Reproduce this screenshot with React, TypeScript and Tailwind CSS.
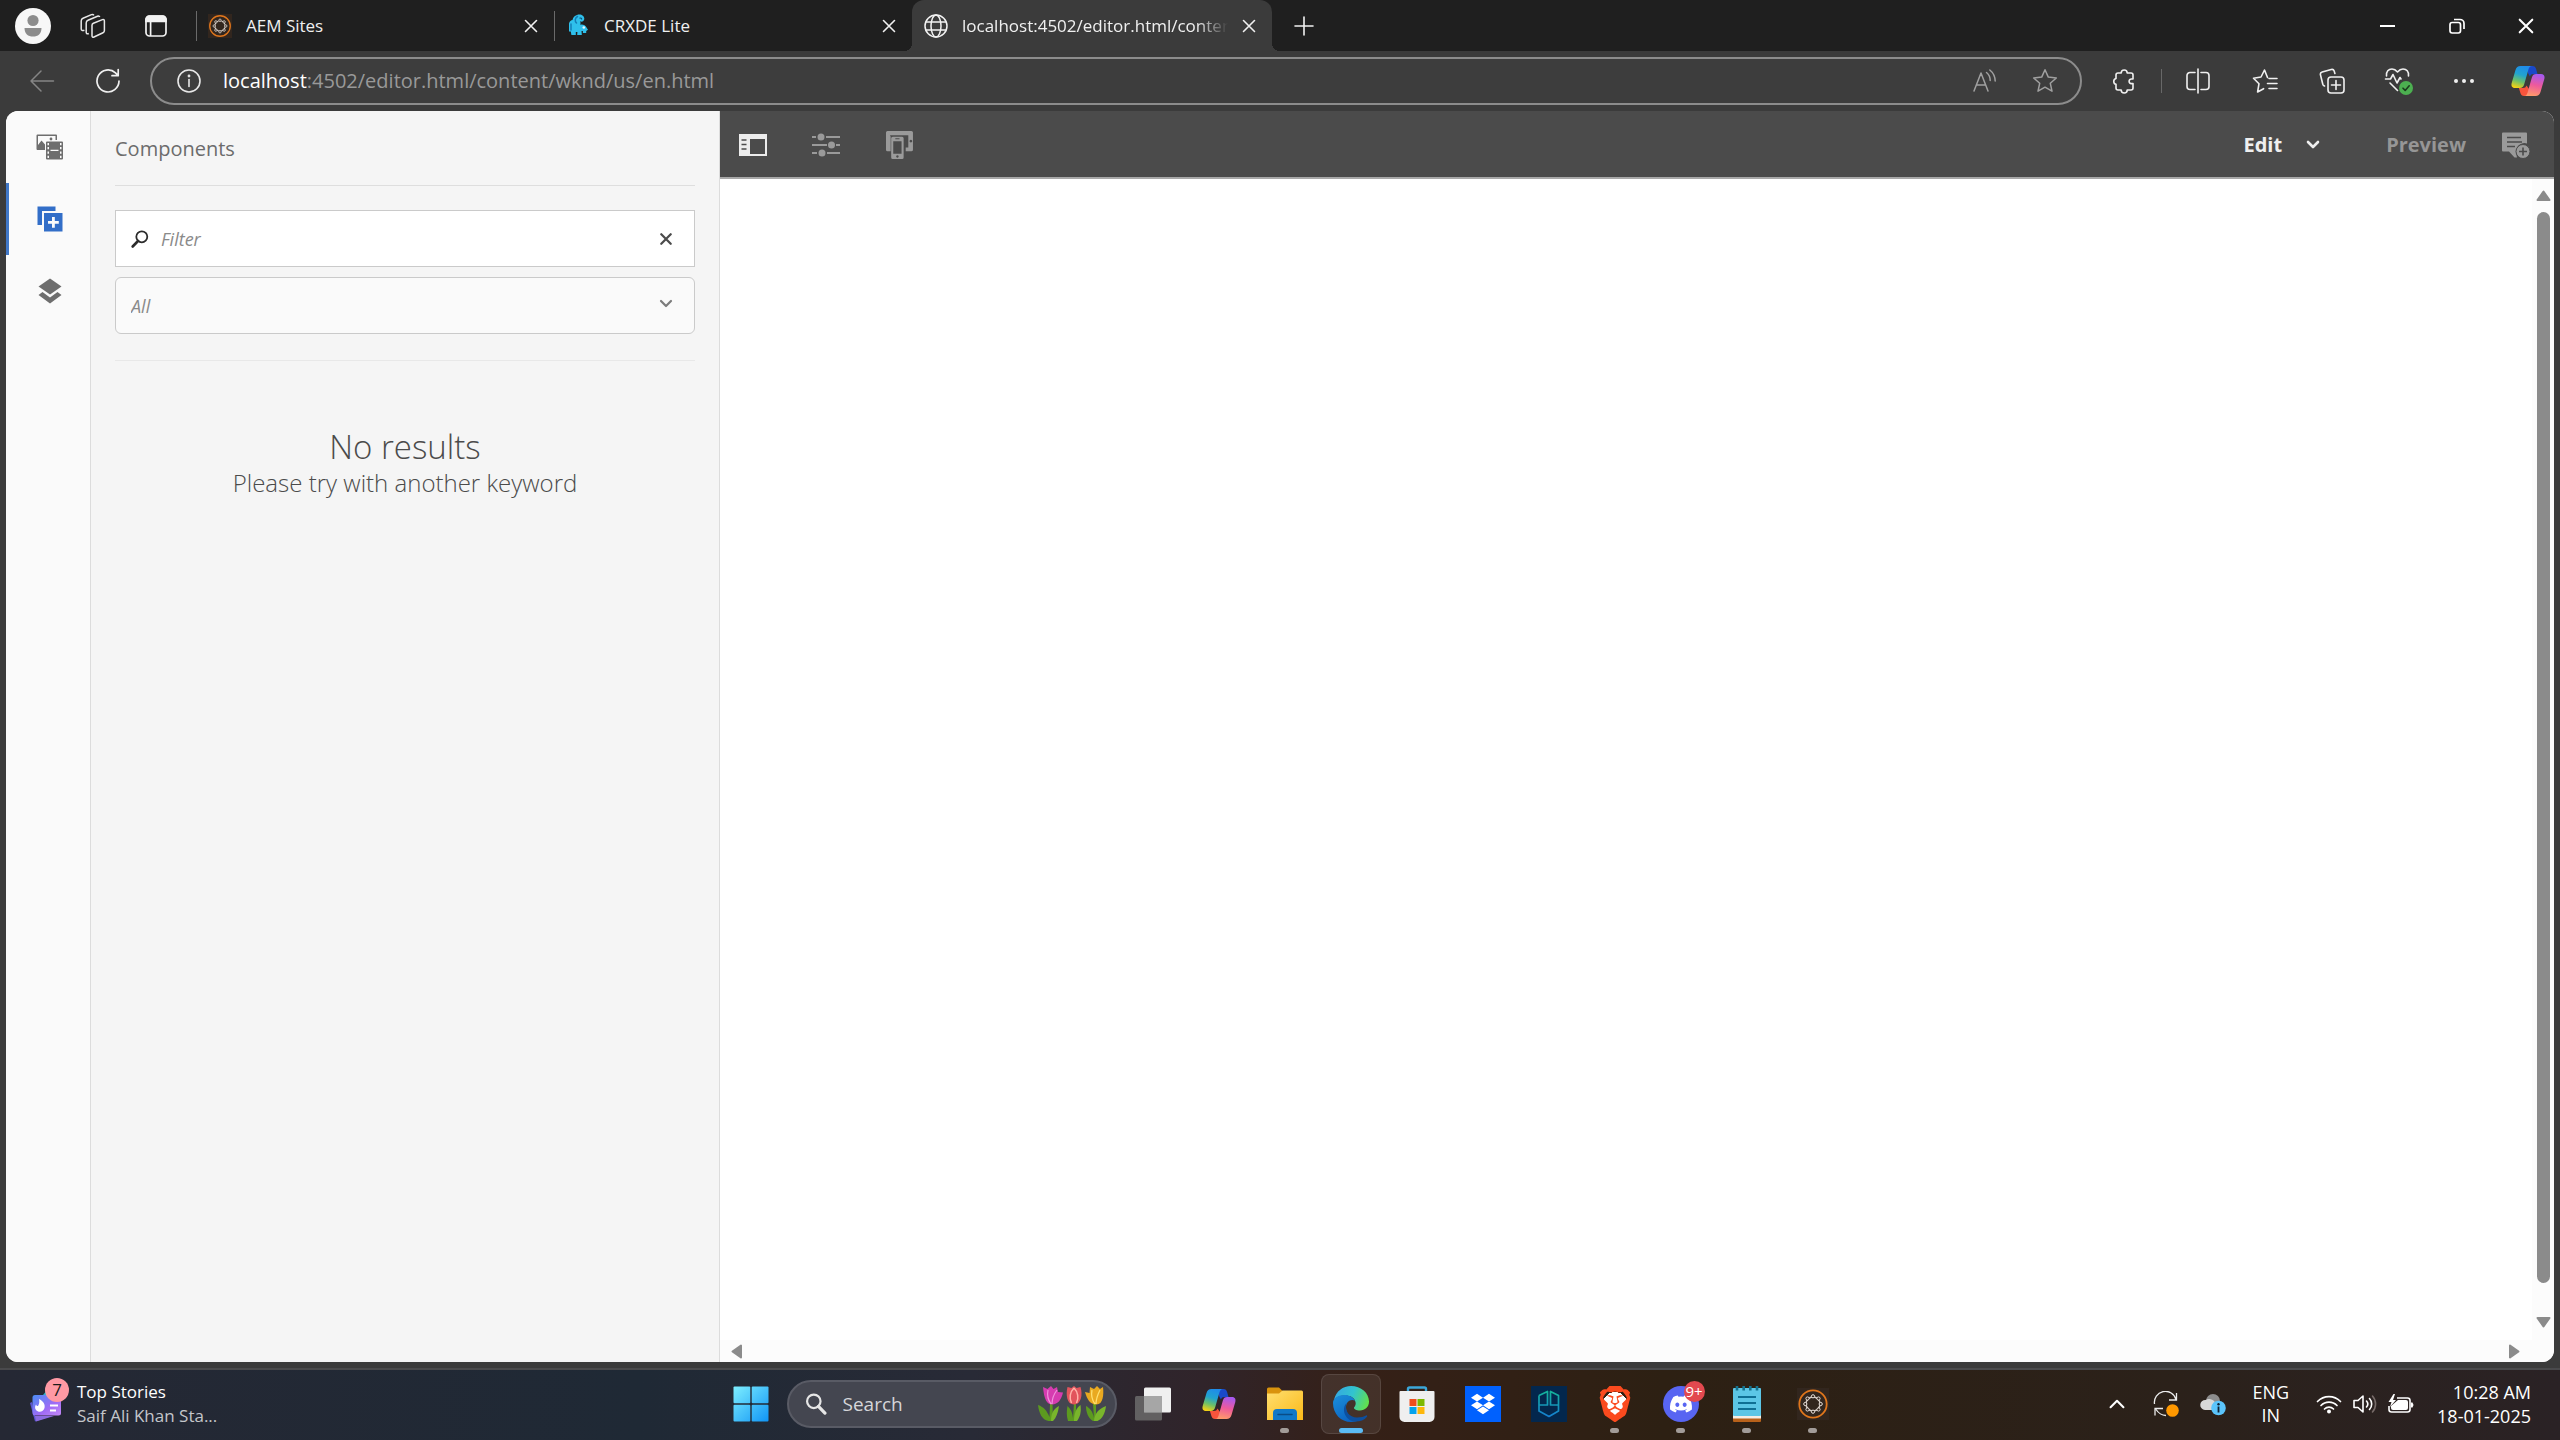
import React from "react";
import { FaDiscord, FaDropbox } from "react-icons/fa";
import { SiBrave } from "react-icons/si";

type P = { className?: string };

/* ---------- browser chrome icons ---------- */

const Cross = ({ className = "size-3.5", w = 1.6 }: P & { w?: number }) => (
  <svg viewBox="0 0 14 14" className={className} fill="none" stroke="currentColor" strokeWidth={w} strokeLinecap="round">
    <path d="M1.5 1.5l11 11M12.5 1.5l-11 11" />
  </svg>
);

const Avatar = () => (
  <svg viewBox="0 0 36 36" className="size-9">
    <circle cx="18" cy="18" r="18" fill="#f7f7f7" />
    <circle cx="18" cy="12.5" r="5.6" fill="#8c8c8c" />
    <path d="M9.5 20h17c0 6-3.5 8.500-8.500 8.500S9.500 26 9.500 20z" fill="#8c8c8c" />
  </svg>
);

const Workspaces = () => (
  <svg viewBox="0 0 26 26" className="size-6.5" fill="none" stroke="#e8e8e8" strokeWidth="1.5" strokeLinejoin="round">
    <path d="M12 12.300c0-1 .5-1.700 1.400-2.100l9-3.600c1.100-.4 2 .1 2 1.300v9.600c0 1-.5 1.800-1.400 2.200l-9 4.300c-1.100.5-2 0-2-1.200z" />
    <path d="M8.800 20.500c-1.500.8-2.600.2-2.600-1.200V10c0-1.300.6-2.200 1.800-2.700l9.500-4c1-.4 1.900-.1 2.200.8" />
    <path d="M4.400 17.300C2.300 18 1.200 17.300 1.200 16V8c0-1.300.6-2.200 1.800-2.700L11.500 1.600c1-.4 1.900-.1 2.400.7" />
  </svg>
);

const TabActions = () => (
  <svg viewBox="0 0 24 24" className="size-6" fill="none" stroke="#f2f2f2" strokeWidth="1.700">
    <rect x="2" y="2" width="20" height="20" rx="3.500" />
    <path d="M2 5.500A3.500 3.500 0 0 1 5.500 2h13A3.500 3.500 0 0 1 22 5.500V7.500H2z" fill="#f2f2f2" />
    <path d="M6.600 8v14" />
  </svg>
);

const AemIcon = ({ className }: P) => (
  <svg viewBox="0 0 32 32" className={className}>
    <rect width="32" height="32" fill="#32261e" />
    <circle cx="16" cy="16" r="13.700" fill="none" stroke="#e0761c" strokeWidth="1.800" />
    <circle cx="16" cy="16" r="7" fill="none" stroke="#d9cfc8" strokeWidth="1.500" />
    <g fill="#32261e" stroke="#e8e0da" strokeWidth="1">
      <circle cx="16" cy="8.300" r="1.600" /><circle cx="21.500" cy="10.500" r="1.600" />
      <circle cx="23.700" cy="16" r="1.600" /><circle cx="21.500" cy="21.500" r="1.600" />
      <circle cx="16" cy="23.700" r="1.600" /><circle cx="10.500" cy="21.500" r="1.600" />
      <circle cx="8.300" cy="16" r="1.600" /><circle cx="10.500" cy="10.500" r="1.600" />
    </g>
  </svg>
);

const CrxIcon = () => (
  <svg viewBox="0 0 24 24" className="size-6">
    <path d="M11 1c3.500-1.500 7.500.5 7.300 4-.2 2.300-2.600 3.300-4.300 2.200.8 1.200.7 2.500 0 3.600 2.500-.9 5.500.3 6.500 2.700l1.500 2.300-1.800 1.200V19h-3.300v-2h-1.400l.3 4h-4.600l.2-3h-1.600v3H5.400l-.6-3.500H3V9.500C3.500 7.500 5 6 6.500 6 7 3.500 8.600 1.700 11 1z" fill="#2fc0ec" />
    <path d="M11.500 2.500C9 4 8.500 7 10.500 9M5 10v6" stroke="#147eb6" strokeWidth="1.500" fill="none" strokeLinecap="round" />
    <path d="M13.500 4.200c1.500-.6 2.400.3 2 1.200" stroke="#0d4e74" strokeWidth="1.200" fill="none" />
    <circle cx="17.800" cy="13.500" r="1.300" fill="#e8faff" />
  </svg>
);

const Globe = () => (
  <svg viewBox="0 0 24 24" className="size-6" fill="none" stroke="#f2f2f2" strokeWidth="1.500">
    <circle cx="12" cy="12" r="11" />
    <ellipse cx="12" cy="12" rx="5" ry="11" />
    <path d="M1.800 8h20.400M1.800 16h20.400" />
  </svg>
);

const PlusThin = () => (
  <svg viewBox="0 0 20 20" className="size-5" fill="none" stroke="#f2f2f2" strokeWidth="1.600" strokeLinecap="round">
    <path d="M10 1v18M1 10h18" />
  </svg>
);

const Back = () => (
  <svg viewBox="0 0 26 24" className="h-6 w-6.5" fill="none" stroke="#858585" strokeWidth="1.500" strokeLinecap="round" strokeLinejoin="round">
    <path d="M12 2L2 12l10 10M2 12h22.500" />
  </svg>
);

const Reload = () => (
  <svg viewBox="0 0 26 26" className="size-6.5" fill="none" stroke="#f0f0f0" strokeWidth="1.700" strokeLinecap="round" strokeLinejoin="round">
    <path d="M24 13a11 11 0 1 1-3.500-8.100L23 7.500M23.200 1.500v6.200h-6.200" />
  </svg>
);

const Info = () => (
  <svg viewBox="0 0 24 24" className="size-6" fill="none" stroke="#e8e8e8" strokeWidth="1.600" strokeLinecap="round">
    <circle cx="12" cy="12" r="11" />
    <path d="M12 10.500v7" />
    <circle cx="12" cy="7" r=".6" fill="#e8e8e8" />
  </svg>
);

const ReadAloud = () => (
  <svg viewBox="0 0 26 26" className="size-6.5" fill="none" stroke="#a0a0a0" strokeWidth="1.500" strokeLinecap="round" strokeLinejoin="round">
    <path d="M2 23L9 5l7 18M4.500 17h9M14.500 4.500c2.500 2 3.700 4.700 3.700 8M17.800 2c3.400 2.700 5.200 6.300 5.400 11" />
  </svg>
);

const starPath = "M13 1.800l3.300 7.300 8 .9-6 5.300 1.700 7.900-7-4-7 4 1.700-7.900-6-5.300 8-.9z";
const Star = () => (
  <svg viewBox="0 0 26 26" className="size-6.5" fill="none" stroke="#a0a0a0" strokeWidth="1.500" strokeLinejoin="round">
    <path d={starPath} />
  </svg>
);

const Puzzle = () => (
  <svg viewBox="0 0 26 26" className="size-6.5" fill="none" stroke="#f0f0f0" strokeWidth="1.600" strokeLinejoin="round">
    <path d="M10.200 5a3 3 0 0 1 6 0H20a2 2 0 0 1 2 2v4h-1.600a2.300 2.300 0 0 0 0 4.600H22V20a2 2 0 0 1-2 2h-3.800a3 3 0 0 1-6 0H7a2 2 0 0 1-2-2v-3.700a3 3 0 0 1 0-5.800V7a2 2 0 0 1 2-2z" />
  </svg>
);

const SplitView = () => (
  <svg viewBox="0 0 26 26" className="size-6.5" fill="none" stroke="#f0f0f0" strokeWidth="1.600" strokeLinecap="round">
    <path d="M13 1v24M10 4.500H5a3 3 0 0 0-3 3v11a3 3 0 0 0 3 3h5M16 4.500h5a3 3 0 0 1 3 3v11a3 3 0 0 1-3 3h-5" />
  </svg>
);

const Favorites = () => (
  <svg viewBox="0 0 26 26" className="size-6.5" fill="none" stroke="#f0f0f0" strokeWidth="1.600" strokeLinecap="round" strokeLinejoin="round">
    <path d="M15.500 9.500L12.500 2 9 9l-7.500 1.200L7 15.700 5.600 24l6-3.300M17 10.500h8M15.500 15.500H25M17 20.500h8" />
  </svg>
);

const Collections = () => (
  <svg viewBox="0 0 26 26" className="size-6.5" fill="none" stroke="#f0f0f0" strokeWidth="1.600" strokeLinecap="round" strokeLinejoin="round">
    <rect x="9" y="9" width="16" height="16" rx="3" />
    <path d="M17 12.500v9M12.500 17h9M5.500 18c-1-.3-1.400-.8-1.700-1.700L1.500 7c-.4-1.500.3-2.600 1.700-3l9-2.500c1.400-.4 2.500.2 3 1.600l.7 2.400" />
  </svg>
);

const Essentials = () => (
  <svg viewBox="0 0 30 30" className="size-7.5" fill="none" stroke="#f0f0f0" strokeWidth="1.600" strokeLinecap="round" strokeLinejoin="round">
    <path d="M2.500 10C2 5.500 4.500 3 8 3c2.500 0 4 1.200 5.500 3C15 4.200 16.500 3 19 3c3.500 0 6 2.500 5.500 7M1.500 13h5l2.500-4.500 4 8.500 3-5.500 1 1.500M6 17l7.500 7.500" />
    <circle cx="22" cy="22" r="7" fill="#4caf50" stroke="none" />
    <path d="M19 22.200l2.200 2.200 4-4.600" stroke="#1c3a1d" />
  </svg>
);

const Dots = () => (
  <svg viewBox="0 0 24 6" className="h-1.5 w-6" fill="#f0f0f0">
    <circle cx="4" cy="3" r="2" /><circle cx="12" cy="3" r="2" /><circle cx="20" cy="3" r="2" />
  </svg>
);

const Copilot = ({ className, id }: P & { id: string }) => (
  <svg viewBox="0 0 34 32" className={className}>
    <defs>
      <linearGradient id={id + "a"} x1=".6" y1="0" x2=".3" y2="1">
        <stop offset="0" stopColor="#1f8bea" /><stop offset=".4" stopColor="#21a3cf" /><stop offset=".7" stopColor="#6cc06a" /><stop offset="1" stopColor="#f2d015" />
      </linearGradient>
      <linearGradient id={id + "b"} x1=".6" y1="0" x2=".4" y2="1">
        <stop offset="0" stopColor="#a659f0" /><stop offset=".5" stopColor="#ee5a9c" /><stop offset="1" stopColor="#ff9a6a" />
      </linearGradient>
    </defs>
    <path d="M16 1h5.500c2 0 3 1.200 3.600 3l1.400 5h-4c-2 0-3 .8-3.600 2.500L17 8z" fill="#1a49c9" />
    <path d="M18 31h-5c-2 0-3-1.200-3.600-3l-1.500-5h4c2 0 3-.8 3.600-2.500L18 24z" fill="#f8543c" />
    <path d="M9.500 1H21c-2 0-2.900 1.300-3.500 3.300l-4.300 15c-.8 2.700-2 3.700-4.400 3.700H4c-3.200 0-4-2.500-3.300-5L4.500 5C5.300 2.500 6.800 1 9.500 1z" fill={`url(#${id}a)`} />
    <path d="M24.500 31H13c2 0 2.900-1.300 3.500-3.300l4.300-15c.8-2.700 2-3.700 4.400-3.700H30c3.200 0 4 2.500 3.300 5l-3.800 13c-.8 2.500-2.300 4-5 4z" fill={`url(#${id}b)`} />
  </svg>
);

const Restore = () => (
  <svg viewBox="0 0 16 16" className="size-4" fill="none" stroke="#fff" strokeWidth="1.700">
    <rect x="1" y="4.500" width="10.500" height="10.500" rx="2.200" />
    <path d="M5 1.500h6A4 4 0 0 1 15 5.500V11" />
  </svg>
);

/* ---------- editor icons ---------- */

const Assets = () => (
  <svg viewBox="0 0 27 26" className="h-6.5 w-7" fill="#6e6e6e">
    <path d="M0 1.500A1 1 0 0 1 1 .5h18.500a1 1 0 0 1 1 1V6H19V2H1.500v9L5 6.500l3.500 4V16H1a1 1 0 0 1-1-1z" />
    <circle cx="14.500" cy="5" r="1.400" />
    <path fillRule="evenodd" d="M10.500 7.500h15a1 1 0 0 1 1 1v16a1 1 0 0 1-1 1h-15a1 1 0 0 1-1-1v-16a1 1 0 0 1 1-1zM11 9v2.200h1.500V9zm0 4v2.200h1.500V13zm0 4.500v2.200h1.500v-2.200zm0 4.300V24h1.500v-2.200zM23.500 9v2.200H25V9zm0 4v2.200H25V13zm0 4.500v2.200H25v-2.200zm0 4.300V24H25v-2.200zM14 15.800V17h8v-1.200z" />
  </svg>
);

const ComponentsIcon = () => (
  <svg viewBox="0 0 26 26" className="size-6.5" fill="#326ec8">
    <path d="M.5.500h18V5H5v14H.5z" />
    <path fillRule="evenodd" d="M7 7h18.500v18.500H7zm8 4v4h-4v2.800h4v4h2.800v-4h4V15h-4v-4z" />
  </svg>
);

const Layers = () => (
  <svg viewBox="0 0 24 26" className="h-6.5 w-6" fill="#6e6e6e">
    <path d="M12 .5L23.500 8.500 12 16.500.5 8.500z" />
    <path d="M4.500 14L.5 17 12 25.500 23.500 17l-4-3L12 19.500z" />
  </svg>
);

const Search = ({ className }: P) => (
  <svg viewBox="0 0 18 18" className={className} fill="none" stroke="#2c2c2c" strokeWidth="1.800" strokeLinecap="round">
    <circle cx="10.800" cy="6.800" r="5.500" />
    <path d="M7 11l-5.300 5.500" strokeWidth="2.600" />
  </svg>
);

const Chevron = ({ className, w = 2 }: P & { w?: number }) => (
  <svg viewBox="0 0 14 9" className={className} fill="none" stroke="currentColor" strokeWidth={w} strokeLinecap="round" strokeLinejoin="round">
    <path d="M2 2l5 5 5-5" />
  </svg>
);

const RailIcon = () => (
  <svg viewBox="0 0 28 22" className="h-5.5 w-7">
    <path fillRule="evenodd" fill="#ececec" d="M0 0h28v22H0zM11 5v15h15V5z" />
    <path d="M2.500 6h5M2.500 10.500h5M2.500 15h5" stroke="#4b4b4b" strokeWidth="1.600" />
  </svg>
);

const Sliders = () => (
  <svg viewBox="0 0 28 24" className="h-6 w-7" stroke="#9a9a9a" strokeWidth="1.900" fill="#9a9a9a">
    <path d="M0 4h4M14 4h14M0 12h15M24 12h4M0 20h5M15 20h13" />
    <circle cx="9" cy="4" r="3.500" stroke="none" /><circle cx="19.500" cy="12" r="3.500" stroke="none" /><circle cx="10" cy="20" r="3.500" stroke="none" />
  </svg>
);

const Devices = () => (
  <svg viewBox="0 0 27 27" className="size-7" fill="#9a9a9a">
    <path fillRule="evenodd" d="M1.500 0h23A1.500 1.500 0 0 1 26 1.500V18a1.500 1.500 0 0 1-1.500 1.500H19V16h2.500V4H4v1h.5v14.500H1.500A1.500 1.500 0 0 1 0 18V1.500A1.500 1.500 0 0 1 1.500 0zM24 8.500a1.300 1.300 0 1 0 .01 0z" />
    <path fillRule="evenodd" d="M6.500 5.500h9A1.500 1.500 0 0 1 17 7v18.500a1.500 1.500 0 0 1-1.500 1.500h-9A1.500 1.500 0 0 1 5 25.500V7a1.500 1.500 0 0 1 1.500-1.500zM7 10v12h8V10zm4 13.300a1.200 1.200 0 1 0 .01 0zM9 7v1h4V7z" />
  </svg>
);

const Annotate = () => (
  <svg viewBox="0 0 28 27" className="size-7">
    <path d="M1 1h23a1 1 0 0 1 1 1v10a8.500 8.500 0 0 0-11 9l1 5h-2.500L7 20H1a1 1 0 0 1-1-1V2a1 1 0 0 1 1-1z" fill="#9a9a9a" />
    <path d="M5 6h14M5 10.500h15M5 15h8" stroke="#4b4b4b" strokeWidth="1.500" />
    <circle cx="21" cy="20" r="7" fill="#9a9a9a" stroke="#4b4b4b" strokeWidth="1" />
    <path d="M21 16v8M17 20h8" stroke="#4b4b4b" strokeWidth="1.600" />
  </svg>
);

const Triangle = ({ className }: P) => (
  <svg viewBox="0 0 15 11" className={className} fill="#8b8b8b" stroke="#8b8b8b" strokeWidth="2" strokeLinejoin="round">
    <path d="M7.500 1.500L13.500 10h-12z" />
  </svg>
);

/* ---------- taskbar icons ---------- */

const Widgets = () => (
  <svg viewBox="0 0 34 32" className="h-8 w-8.5">
    <defs>
      <linearGradient id="wg" x1="0" y1="0" x2="1" y2="1">
        <stop offset="0" stopColor="#4a8df5" /><stop offset=".6" stopColor="#a06bf5" /><stop offset="1" stopColor="#c58af8" />
      </linearGradient>
    </defs>
    <path d="M14 5l4-5 6 3v8H14z" fill="#28b3c7" />
    <path d="M1 13l2-1 3 14h17L6 31.500z" fill="#5a55cf" />
    <path d="M6 26h19L7 31.500z" fill="#8c6be0" />
    <rect x="3.500" y="5" width="28.500" height="20.500" rx="2.500" fill="url(#wg)" />
    <path d="M10 9c4 2 6.500 5 5.500 9-1 4-6 5-8.500 2-1.500-2-1-4 0-5.500.5 1 1 1.500 2 1.500 1.200-2 1.700-4 1-7z" fill="#fff" />
    <path d="M21 15.500h8M21 20.500h6" stroke="#fff" strokeWidth="2" />
  </svg>
);

const Start = () => (
  <svg viewBox="0 0 36 36" className="size-9">
    <defs>
      <linearGradient id="st" x1="0" y1="0" x2="36" y2="36" gradientUnits="userSpaceOnUse">
        <stop offset="0" stopColor="#7ff0ff" /><stop offset="1" stopColor="#0e93f5" />
      </linearGradient>
    </defs>
    <g fill="url(#st)">
      <rect x=".5" y=".5" width="16.800" height="16.800" rx="1" /><rect x="18.700" y=".5" width="16.800" height="16.800" rx="1" />
      <rect x=".5" y="18.700" width="16.800" height="16.800" rx="1" /><rect x="18.700" y="18.700" width="16.800" height="16.800" rx="1" />
    </g>
  </svg>
);

const Tulips = () => (
  <svg viewBox="0 0 72 38" className="h-9.5 w-18">
    <g fill="#5c9a1f">
      <path d="M13 19l2.500-1 .5 18h-4.500C5 35 2 28 1 20c6 2 9 6 11.500 12z" />
      <path d="M14 36c0-7 2-12 8-15-1 7-3 12-6 15z" fill="#79b52c" />
      <path d="M37 18h2v18h-8c-1.500-5-1.500-10-.5-15 3.500 3 5 7 5.500 12z" />
      <path d="M37 36c0-7 2-13 6.500-16 1 7-.5 12-3.500 16z" fill="#79b52c" />
      <path d="M56 19h3v17h-3c-5-3-7-9-7-15 4 2 7 6 8 12z" />
      <path d="M57 36c.5-7 4-12 12-15-1 8-4 13-8.500 15z" fill="#79b52c" />
    </g>
    <path d="M6 2l4.500 2L14 1l2.500 3L20 2l1 5 5 .5c-1.500 7-5 12-11 12-5 0-8-5-9-17.500z" fill="#d63cb0" />
    <path d="M11 5c-1 5 0 10 3 14M20 5c-3 4-5 9-5 14" stroke="#f092dc" strokeWidth="1.200" fill="none" />
    <path d="M30.500 2l4 1L37 1l2.500 2 4-1C46 10 44 19.500 37 19.500S28.500 10 30.500 2z" fill="#e2545c" />
    <path d="M37 3c-4 4-5 10-2.500 15M37 3c4 4 5 10 2.500 15" stroke="#ffb1a8" strokeWidth="1.500" fill="none" />
    <path d="M48 7l4.500 1L53 2l4 2 3-3 3 3 3-2c1 8 0 17.500-6.500 17.500C53 19.500 50 14 48 7z" fill="#e9a920" />
    <path d="M55 5c-1 5 0 10 3 14M63 5c-2 4-4 9-4 14" stroke="#ffdf6e" strokeWidth="1.300" fill="none" />
  </svg>
);

const TaskView = () => (
  <svg viewBox="0 0 36 34" className="h-8.5 w-9">
    <rect x="9" y=".5" width="27" height="25" rx="1.500" fill="#f0f0f0" />
    <rect x="0" y="9" width="27" height="24.500" rx="1.500" fill="#6b6b6b" fillOpacity=".85" />
    <rect x="9" y="9" width="18" height="16.500" fill="#a6a6a6" />
  </svg>
);

const Explorer = () => (
  <svg viewBox="0 0 36 34" className="h-8.5 w-9">
    <defs>
      <linearGradient id="fo" x1="0" y1="0" x2="1" y2="1"><stop offset="0" stopColor="#ffdf70" /><stop offset="1" stopColor="#fbb918" /></linearGradient>
    </defs>
    <path d="M0 2A1.500 1.500 0 0 1 1.500.5H12L16 4.500 12 10H0z" fill="#d9930d" />
    <path d="M0 6.500h12l3.500-3H34.500A1.500 1.500 0 0 1 36 5v28H0z" fill="url(#fo)" />
    <path d="M6 33v-7a4 4 0 0 1 4-4h16a4 4 0 0 1 4 4v7z" fill="#1078c8" />
    <path d="M11 27.500h14" stroke="#0a4c86" strokeWidth="1.500" strokeLinecap="round" />
  </svg>
);

const Edge = () => (
  <svg viewBox="0 0 36 36" className="size-9">
    <defs>
      <linearGradient id="e1" x1="0" y1=".3" x2="1" y2=".6"><stop offset="0" stopColor="#35a7e2" /><stop offset=".5" stopColor="#32c4cf" /><stop offset="1" stopColor="#62e04c" /></linearGradient>
      <linearGradient id="e2" x1="0" y1="0" x2=".6" y2="1"><stop offset="0" stopColor="#1b8fdb" /><stop offset="1" stopColor="#0b62c0" /></linearGradient>
    </defs>
    <path d="M1 14C3 5 10 0 18 0c10 0 18 7 18 15.500 0 5.500-4 9-9 9-4 0-6.500-1.500-6-3 1.500-1.800 2-3.500 1.500-5.500C21.500 11.500 17 9.500 12 9.500 7 9.500 3 11 1 14z" fill="url(#e1)" />
    <path d="M0 17c0-4.500 5-8 11.500-8 5 0 9 2.500 10.500 5.500-5-2-9 1.500-9 7 0 8 7 13 15 11.500C25 35 22 36 18 36 8 36 0 28 0 17z" fill="url(#e2)" />
    <path d="M13.500 17c-2.500 8 3 14.500 10.500 14.500 4 0 7-1 9-2 1-.5 1.500.5 1 1.200C31 34.500 26 36 21 35.500 12 34 8 23 13.500 17z" fill="#0d4f9e" />
  </svg>
);

const Store = () => (
  <svg viewBox="0 0 36 36" className="size-9">
    <path d="M9 6V3a1.500 1.500 0 0 1 1.500-1.500h15A1.500 1.500 0 0 1 27 3v3" fill="none" stroke="#3ba7d9" strokeWidth="2.400" />
    <path d="M1.500 5h33A1 1 0 0 1 35.500 6v25a5 5 0 0 1-5 5h-25a5 5 0 0 1-5-5V6a1 1 0 0 1 1-1z" fill="#efefef" />
    <path d="M10.500 13h7v7h-7z" fill="#f04e1f" /><path d="M18.500 13h7v7h-7z" fill="#7db900" />
    <path d="M10.500 21h7v7h-7z" fill="#05a3ec" /><path d="M18.500 21h7v7h-7z" fill="#fdb70b" />
  </svg>
);

const Hex = () => (
  <svg viewBox="0 0 36 36" className="size-9">
    <defs>
      <linearGradient id="hx" x1="0" y1="0" x2="0" y2="1"><stop offset="0" stopColor="#14b29a" /><stop offset="1" stopColor="#1580d0" /></linearGradient>
    </defs>
    <rect width="36" height="36" fill="#03274d" />
    <path d="M8 9.500L16.500 5.500V19H8.500M8 9.500V25l10 5.500 9.500-5.500V9.500L19.500 5.500V19h8" fill="none" stroke="url(#hx)" strokeWidth="1.700" strokeLinejoin="round" />
  </svg>
);

const Notepad = () => (
  <svg viewBox="0 0 28 36" className="h-9 w-7">
    <rect y="29" width="28" height="7" rx="1" fill="#b8611a" />
    <rect y="26" width="28" height="6.500" fill="#f4ede4" />
    <rect y="2" width="28" height="28" rx="1" fill="#5cc6e6" />
    <path d="M5 11h18M5 17h18M5 23h18" stroke="#0f6f94" strokeWidth="2" />
    <path d="M4 0v4.500M10.700 0v4.500M17.300 0v4.500M24 0v4.500" stroke="#14738f" strokeWidth="2.600" />
  </svg>
);

const Sync = () => (
  <svg viewBox="0 0 26 26" className="size-6.5" fill="none" stroke="#ececec" strokeWidth="1.300">
    <path d="M1.500 13A11 11 0 0 1 23 8.500M23.500 2v7H16M2 24.500v-7h8M3 18.500c3 4.500 6 5.800 10 6" />
    <circle cx="19.500" cy="19.500" r="6.300" fill="#ff9800" stroke="none" />
  </svg>
);

const Cloud = () => (
  <svg viewBox="0 0 26 24" className="h-6 w-6.5">
    <circle cx="13" cy="9" r="7" fill="#8d8d8d" />
    <path d="M5 18a5 5 0 0 1 .5-10c3-2 7-1 9 1.500l3 8.500z" fill="#d8d8d8" />
    <circle cx="18.500" cy="16" r="7.300" fill="#5bc4fb" />
    <path d="M18.500 14.500v6" stroke="#123" strokeWidth="1.800" /><circle cx="18.500" cy="12.200" r="1.200" fill="#123" />
  </svg>
);

const Wifi = () => (
  <svg viewBox="0 0 26 20" className="h-5 w-6.5" fill="none" stroke="#fff" strokeWidth="1.700" strokeLinecap="round">
    <path d="M1.500 7.500a16 16 0 0 1 23 0M5 11.500a11 11 0 0 1 16 0M8.500 15a6.500 6.500 0 0 1 9 0" />
    <circle cx="13" cy="17.500" r="2" fill="#fff" stroke="none" />
  </svg>
);

const Sound = () => (
  <svg viewBox="0 0 26 22" className="h-5.5 w-6.5" fill="none" stroke="#fff" strokeWidth="1.600" strokeLinejoin="round" strokeLinecap="round">
    <path d="M2 7.500h4L11 3v16l-5-4.500H2z" />
    <path d="M14.500 8a4.500 4.500 0 0 1 0 6M17.500 5.500a8 8 0 0 1 0 11" />
    <path d="M20.500 3a12 12 0 0 1 0 16" stroke="#776b69" />
  </svg>
);

const Battery = () => (
  <svg viewBox="0 0 26 20" className="h-5 w-6.5">
    <path d="M9 4h10.500A2.500 2.500 0 0 1 22 6.500v9a2.500 2.500 0 0 1-2.500 2.500h-16A2.500 2.500 0 0 1 1 15.500V12" fill="none" stroke="#fff" strokeWidth="1.600" />
    <path d="M10 6h8a2 2 0 0 1 2 2v6a2 2 0 0 1-2 2H5a2 2 0 0 1-2-2v-2z" fill="#fff" />
    <path d="M23 8.500h1.500l1 2.500-1 2.500H23z" fill="#fff" />
    <path d="M5.500 0L.5 8h3L2 13l6-7H5L7 0z" fill="#fff" />
  </svg>
);

/* ---------- building blocks ---------- */

const Tab = ({ icon, title }: { icon: React.ReactNode; title: string }) => (
  <div className="flex h-full w-[357px] items-center gap-3.5 pr-4 pl-[11px] text-[#f0f0f0]">
    {icon}
    <span className="flex-1 overflow-hidden text-[17px] whitespace-nowrap">{title}</span>
    <button aria-label={"Close " + title} className="flex"><Cross /></button>
  </div>
);

const ToolButton = ({ label, children, className = "w-[67px]" }: { label: string; children: React.ReactNode; className?: string }) => (
  <button aria-label={label} className={"flex h-12 items-center justify-center " + className}>{children}</button>
);

const TaskApp = ({ label, children, running, active }: { label: string; children: React.ReactNode; running?: boolean; active?: boolean }) => (
  <button
    aria-label={label}
    className={
      "relative mx-[3px] flex h-15 w-15 items-center justify-center rounded-lg border " +
      (active ? "border-white/10 bg-white/8" : "border-transparent")
    }
  >
    {children}
    {running && <span className="absolute bottom-0 h-[5px] w-[9px] rounded-full bg-[#a29c99]" />}
    {active && <span className="absolute bottom-0 h-[5px] w-6 rounded-full bg-[#5bbcf5]" />}
  </button>
);

const RailTab = ({ label, children, active }: { label: string; children: React.ReactNode; active?: boolean }) => (
  <button
    aria-label={label}
    className={
      "flex h-[72px] w-full items-center justify-center border-l-3 pl-px " +
      (active ? "border-[#4178c8]" : "border-transparent")
    }
  >
    {children}
  </button>
);

export default function App() {
  return (
    <div className='flex min-h-screen flex-col bg-[#3b3b3b] font-["Open_Sans",sans-serif]'>
      {/* tab strip */}
      <header className="flex h-[51px] items-center bg-[#1f1f1f]">
        <button aria-label="Profile" className="ml-[15px]"><Avatar /></button>
        <button aria-label="Workspaces" className="ml-[29px]"><Workspaces /></button>
        <button aria-label="Tab actions" className="ml-[38px]"><TabActions /></button>
        <div className="ml-[28px] h-[30px] w-px bg-[#6a6a6a]" />
        <Tab icon={<AemIcon className="size-6" />} title="AEM Sites" />
        <div className="h-[30px] w-px bg-[#6a6a6a]" />
        <Tab icon={<CrxIcon />} title="CRXDE Lite" />
        <div className="relative h-full w-[360px] rounded-t-xl bg-[#3b3b3b]">
          <span className="absolute bottom-0 -left-2 size-2 bg-[radial-gradient(circle_at_0_0,transparent_8px,#3b3b3b_8px)]" />
          <span className="absolute -right-2 bottom-0 size-2 bg-[radial-gradient(circle_at_100%_0,transparent_8px,#3b3b3b_8px)]" />
          <div className="flex h-full items-center pr-4 pl-3 text-[#f0f0f0]">
            <Globe />
            <span className="ml-3.5 flex-1 overflow-hidden [mask-image:linear-gradient(to_right,black_88%,transparent)] text-[17px] whitespace-nowrap">
              localhost:4502/editor.html/content
            </span>
            <button aria-label="Close tab" className="ml-3.5"><Cross /></button>
          </div>
        </div>
        <button aria-label="New tab" className="ml-[22px]"><PlusThin /></button>
        <div className="ml-auto flex h-full items-center text-white">
          <button aria-label="Minimize" className="flex w-[69px] justify-center"><span className="h-0.5 w-[15px] bg-white" /></button>
          <button aria-label="Restore" className="flex w-[69px] justify-center"><Restore /></button>
          <button aria-label="Close" className="flex w-[69px] justify-center"><Cross className="size-4" w={1.8} /></button>
        </div>
      </header>

      {/* address bar */}
      <nav className="flex h-15 items-center">
        <ToolButton label="Back" className="ml-2 w-[68px]"><Back /></ToolButton>
        <ToolButton label="Refresh" className="w-16"><Reload /></ToolButton>
        <div className="ml-[10px] flex h-12 flex-1 items-center rounded-full border-2 border-[#8c8c8c] bg-[#3d3d3d] pr-[22px] pl-[25px]">
          <Info />
          <a href="#address" className="ml-[22px] flex-1 text-[20px] whitespace-nowrap text-[#999999]">
            <span className="text-white">localhost</span>:4502/editor.html/content/wknd/us/en.html
          </a>
          <button aria-label="Read aloud"><ReadAloud /></button>
          <button aria-label="Favorite" className="ml-[34px]"><Star /></button>
        </div>
        <ToolButton label="Extensions" className="ml-[10px] w-16"><Puzzle /></ToolButton>
        <div className="mr-[2px] ml-[5px] h-6 w-px bg-[#686868]" />
        <ToolButton label="Split screen"><SplitView /></ToolButton>
        <ToolButton label="Favorites"><Favorites /></ToolButton>
        <ToolButton label="Collections"><Collections /></ToolButton>
        <ToolButton label="Browser essentials"><Essentials /></ToolButton>
        <ToolButton label="Settings and more" className="w-16"><Dots /></ToolButton>
        <ToolButton label="Copilot" className="w-16"><Copilot id="c1" className="h-8 w-8.5" /></ToolButton>
      </nav>

      {/* page */}
      <main className="mr-[6px] ml-[6px] flex flex-1 overflow-hidden rounded-xl bg-white">
        <aside className="w-[85px] border-r border-[#dcdcdc] bg-[#fafafa]">
          <RailTab label="Assets"><Assets /></RailTab>
          <RailTab label="Components" active><ComponentsIcon /></RailTab>
          <RailTab label="Content Tree"><Layers /></RailTab>
        </aside>

        <section className="w-[629px] border-r border-[#dcdcdc] bg-[#f5f5f5] px-6">
          <h1 className="flex h-[75px] items-center border-b border-[#dedede] pt-[2px] text-[20px] text-[#6c6c6c]">Components</h1>
          <div className="mt-6 flex h-[57px] items-center border border-[#cacaca] bg-white pt-px pr-[22px] pl-[15px]">
            <Search className="size-4.5" />
            <input
              aria-label="Filter"
              placeholder="Filter"
              className="ml-3 min-w-0 flex-1 text-[18px] text-[#4b4b4b] italic outline-none placeholder:text-[#8a8a8a]"
            />
            <button aria-label="Clear filter" className="text-[#4b4b4b]"><Cross className="size-3" w={2.6} /></button>
          </div>
          <div className="relative mt-[10px]">
            <select
              aria-label="Component group"
              className="h-[57px] w-full appearance-none rounded-md border border-[#cacaca] bg-[#fafafa] pt-px pl-[15px] text-[18px] text-[#8a8a8a] italic"
            >
              <option>All</option>
            </select>
            <Chevron className="pointer-events-none absolute top-[22px] right-[22px] h-[9px] w-3.5 text-[#7c7c7c]" w={2.2} />
          </div>
          <div className="mt-[26px] border-t border-[#e8e8e8] pt-[62px] text-center font-light text-[#4b4b4b]">
            <h2 className="text-[33px] leading-[48px]">No results</h2>
            <p className="text-[24px] leading-6">Please try with another keyword</p>
          </div>
        </section>

        <section className="flex flex-1 flex-col">
          <div className="flex h-[68px] items-center border-b-2 border-[#a8a8a8] bg-[#4b4b4b] pt-px pr-6 pl-[19px]">
            <button aria-label="Toggle side panel"><RailIcon /></button>
            <button aria-label="Page information" className="ml-[45px]"><Sliders /></button>
            <button aria-label="Emulator" className="ml-[46px]"><Devices /></button>
            <button className="ml-auto flex items-center gap-6 text-[20px] font-bold text-[#efefef]">
              Edit
              <Chevron className="h-[9px] w-3.5" w={2.6} />
            </button>
            <button className="ml-[66px] text-[20px] font-bold text-[#969696]">Preview</button>
            <button aria-label="Annotate" className="ml-9"><Annotate /></button>
          </div>
          <div className="flex flex-1">
            <div className="flex-1" />
            <div className="flex w-[22px] flex-col items-center bg-[#fcfcfc] pt-[11px]">
              <Triangle className="h-[11px] w-[15px]" />
              <div className="mt-[11px] mb-[34px] w-[13px] flex-1 rounded-full bg-[#8b8b8b]" />
              <Triangle className="mb-[12px] h-[11px] w-[15px] rotate-180" />
            </div>
          </div>
          <div className="flex h-[22px] items-center justify-between bg-[#fcfcfc] pr-[32px] pl-[9px]">
            <Triangle className="h-[11px] w-[15px] -rotate-90" />
            <Triangle className="h-[11px] w-[15px] rotate-90" />
          </div>
        </section>
      </main>

      {/* taskbar */}
      <footer className="mt-[6px] grid h-[72px] grid-cols-[1fr_auto_1fr] items-center border-t-2 border-[#4a4a4c] bg-[linear-gradient(to_right,#252834,#1f2935_25%,#282a36_38%,#30242a_47%,#352017_53%,#2d2013_65%,#2b211a_85%,#2a2225)] pb-[2px] text-white">
        <button className="flex items-center gap-[14px] pl-[29px] text-left">
          <span className="relative pt-1">
            <Widgets />
            <span className="absolute -top-[8px] left-[16px] flex size-6 items-center justify-center rounded-full bg-[#ff99a4] text-[17px] text-[#1b1b1b]">7</span>
          </span>
          <span className="text-[17px] leading-6">
            Top Stories
            <span className="block text-[#c4c6ca]">Saif Ali Khan Sta...</span>
          </span>
        </button>

        <div className="flex items-center pl-[3px]">
          <TaskApp label="Start"><Start /></TaskApp>
          <label className="mx-[3px] flex h-12 w-[330px] items-center rounded-full border-2 border-[#595b65] bg-[#444650] pr-1.5 pl-4">
            <Search className="size-[22px] -scale-x-100 [&_*]:stroke-[#e6e6e6]" />
            <input type="search" aria-label="Search" placeholder="Search" className="ml-4 min-w-0 flex-1 text-[19px] outline-none placeholder:text-[#d5d6da]" />
            <Tulips />
          </label>
          <TaskApp label="Task view"><TaskView /></TaskApp>
          <TaskApp label="Copilot"><Copilot id="c2" className="h-8 w-8.5" /></TaskApp>
          <TaskApp label="File Explorer" running><Explorer /></TaskApp>
          <TaskApp label="Microsoft Edge" active><Edge /></TaskApp>
          <TaskApp label="Microsoft Store"><Store /></TaskApp>
          <TaskApp label="Dropbox">
            <span className="flex size-9 items-center justify-center bg-[#0061fe]"><FaDropbox className="size-6" /></span>
          </TaskApp>
          <TaskApp label="Password manager"><Hex /></TaskApp>
          <TaskApp label="Brave" running>
            <span className="flex size-9 items-center justify-center bg-[radial-gradient(circle,white_12px,transparent_12px)]">
              <SiBrave className="size-9 text-[#fb4a1e]" />
            </span>
          </TaskApp>
          <TaskApp label="Discord" running>
            <span className="flex size-9 items-center justify-center rounded-full bg-[#5865f2]"><FaDiscord className="size-6" /></span>
            <span className="absolute top-[6px] right-[5px] flex size-[21px] items-center justify-center rounded-full bg-[#e2494f] text-[15px]">9+</span>
          </TaskApp>
          <TaskApp label="Notepad" running><Notepad /></TaskApp>
          <TaskApp label="AEM" running><AemIcon className="size-8" /></TaskApp>
        </div>

        <div className="flex items-center justify-end pr-[29px]">
          <button aria-label="Show hidden icons" className="mr-[27px]"><Chevron className="h-3 w-[18px] rotate-180" w={1.6} /></button>
          <button aria-label="Updates" className="mr-[21px]"><Sync /></button>
          <button aria-label="OneDrive" className="mr-[26px]"><Cloud /></button>
          <button className="mr-[27px] text-center text-[18px] leading-[23px]">ENG<br />IN</button>
          <button aria-label="Quick settings" className="mr-[23px] flex items-center gap-[10px]"><Wifi /><Sound /><Battery /></button>
          <button className="text-right text-[18px] leading-6">10:28 AM<br />18-01-2025</button>
        </div>
      </footer>
    </div>
  );
}
